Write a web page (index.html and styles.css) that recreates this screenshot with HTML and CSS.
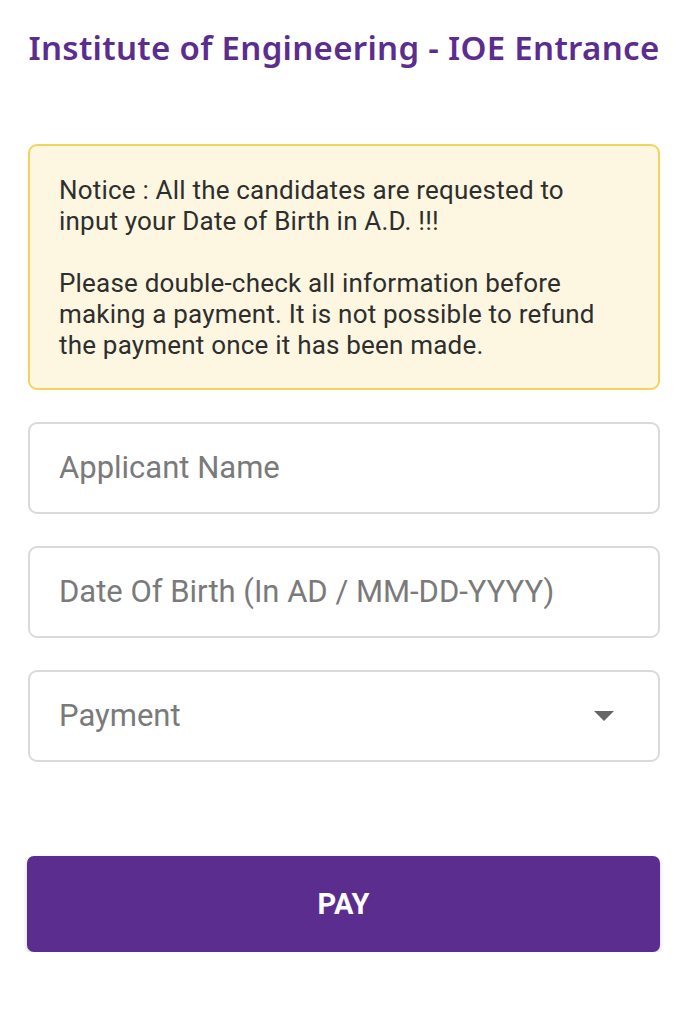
FILE: index.html
```html
<!DOCTYPE html>
<html>
<head>
<meta charset="utf-8">
<link rel="stylesheet" href="styles.css">
</head>
<body>
<div class="page">
  <h1 class="title">Institute of Engineering - IOE Entrance</h1>
  <div class="notice">Notice : All the candidates are requested to input your Date of Birth in A.D. !!!<br><br>Please double-check all information before making a payment. It is not possible to refund the payment once it has been made.</div>
  <div class="field"><span class="ph">Applicant Name</span></div>
  <div class="field"><span class="ph">Date Of Birth (In AD / MM-DD-YYYY)</span></div>
  <div class="field select"><span class="ph">Payment</span><span class="caret"></span></div>
  <button class="pay">PAY</button>
</div>
</body>
</html>
```
FILE: styles.css
```css
html, body { margin: 0; padding: 0; background: #fff; }
.page {
  padding: 0 32px 0 28px;
  display: flex;
  flex-direction: column;
  font-family: Roboto, "Liberation Sans", sans-serif;
}
.title {
  margin: 28px 0 0 0;
  font-family: "Noto Sans", "Open Sans", sans-serif;
  font-weight: 600;
  font-size: 33px;
  line-height: 40px;
  color: #5b2d8e;
  text-align: center;
  white-space: nowrap;
  letter-spacing: 0.3px;
}
.notice {
  margin-top: 76px;
  background: #fdf7e1;
  border: 2px solid #f1d45d;
  border-radius: 9px;
  padding: 29px 44px 27px 29px;
  font-size: 26px;
  letter-spacing: 0.2px;
  line-height: 31px;
  color: #2e2e2e;
}
.field {
  margin-top: 32px;
  border: 2px solid #dadada;
  border-radius: 9px;
  display: flex;
  align-items: center;
  padding: 0 30px 0 29px;
  box-sizing: border-box;
  height: 92px;
  justify-content: space-between;
}
.ph {
  font-size: 31px;
  color: #7a7a7a;
  margin-top: -2px;
}
.caret {
  width: 0; height: 0;
  border-left: 10px solid transparent;
  border-right: 10px solid transparent;
  border-top: 10px solid #666;
  margin-right: 14px;
}
.pay {
  margin-top: 94px;
  margin-left: -1px;
  height: 96px;
  border: none;
  border-radius: 7px;
  background: #5b2d8e;
  color: #fff;
  font-family: Roboto, "Liberation Sans", sans-serif;
  font-weight: 700;
  font-size: 29px;
  box-shadow: 0 2px 4px rgba(0,0,0,0.2);
}
```
